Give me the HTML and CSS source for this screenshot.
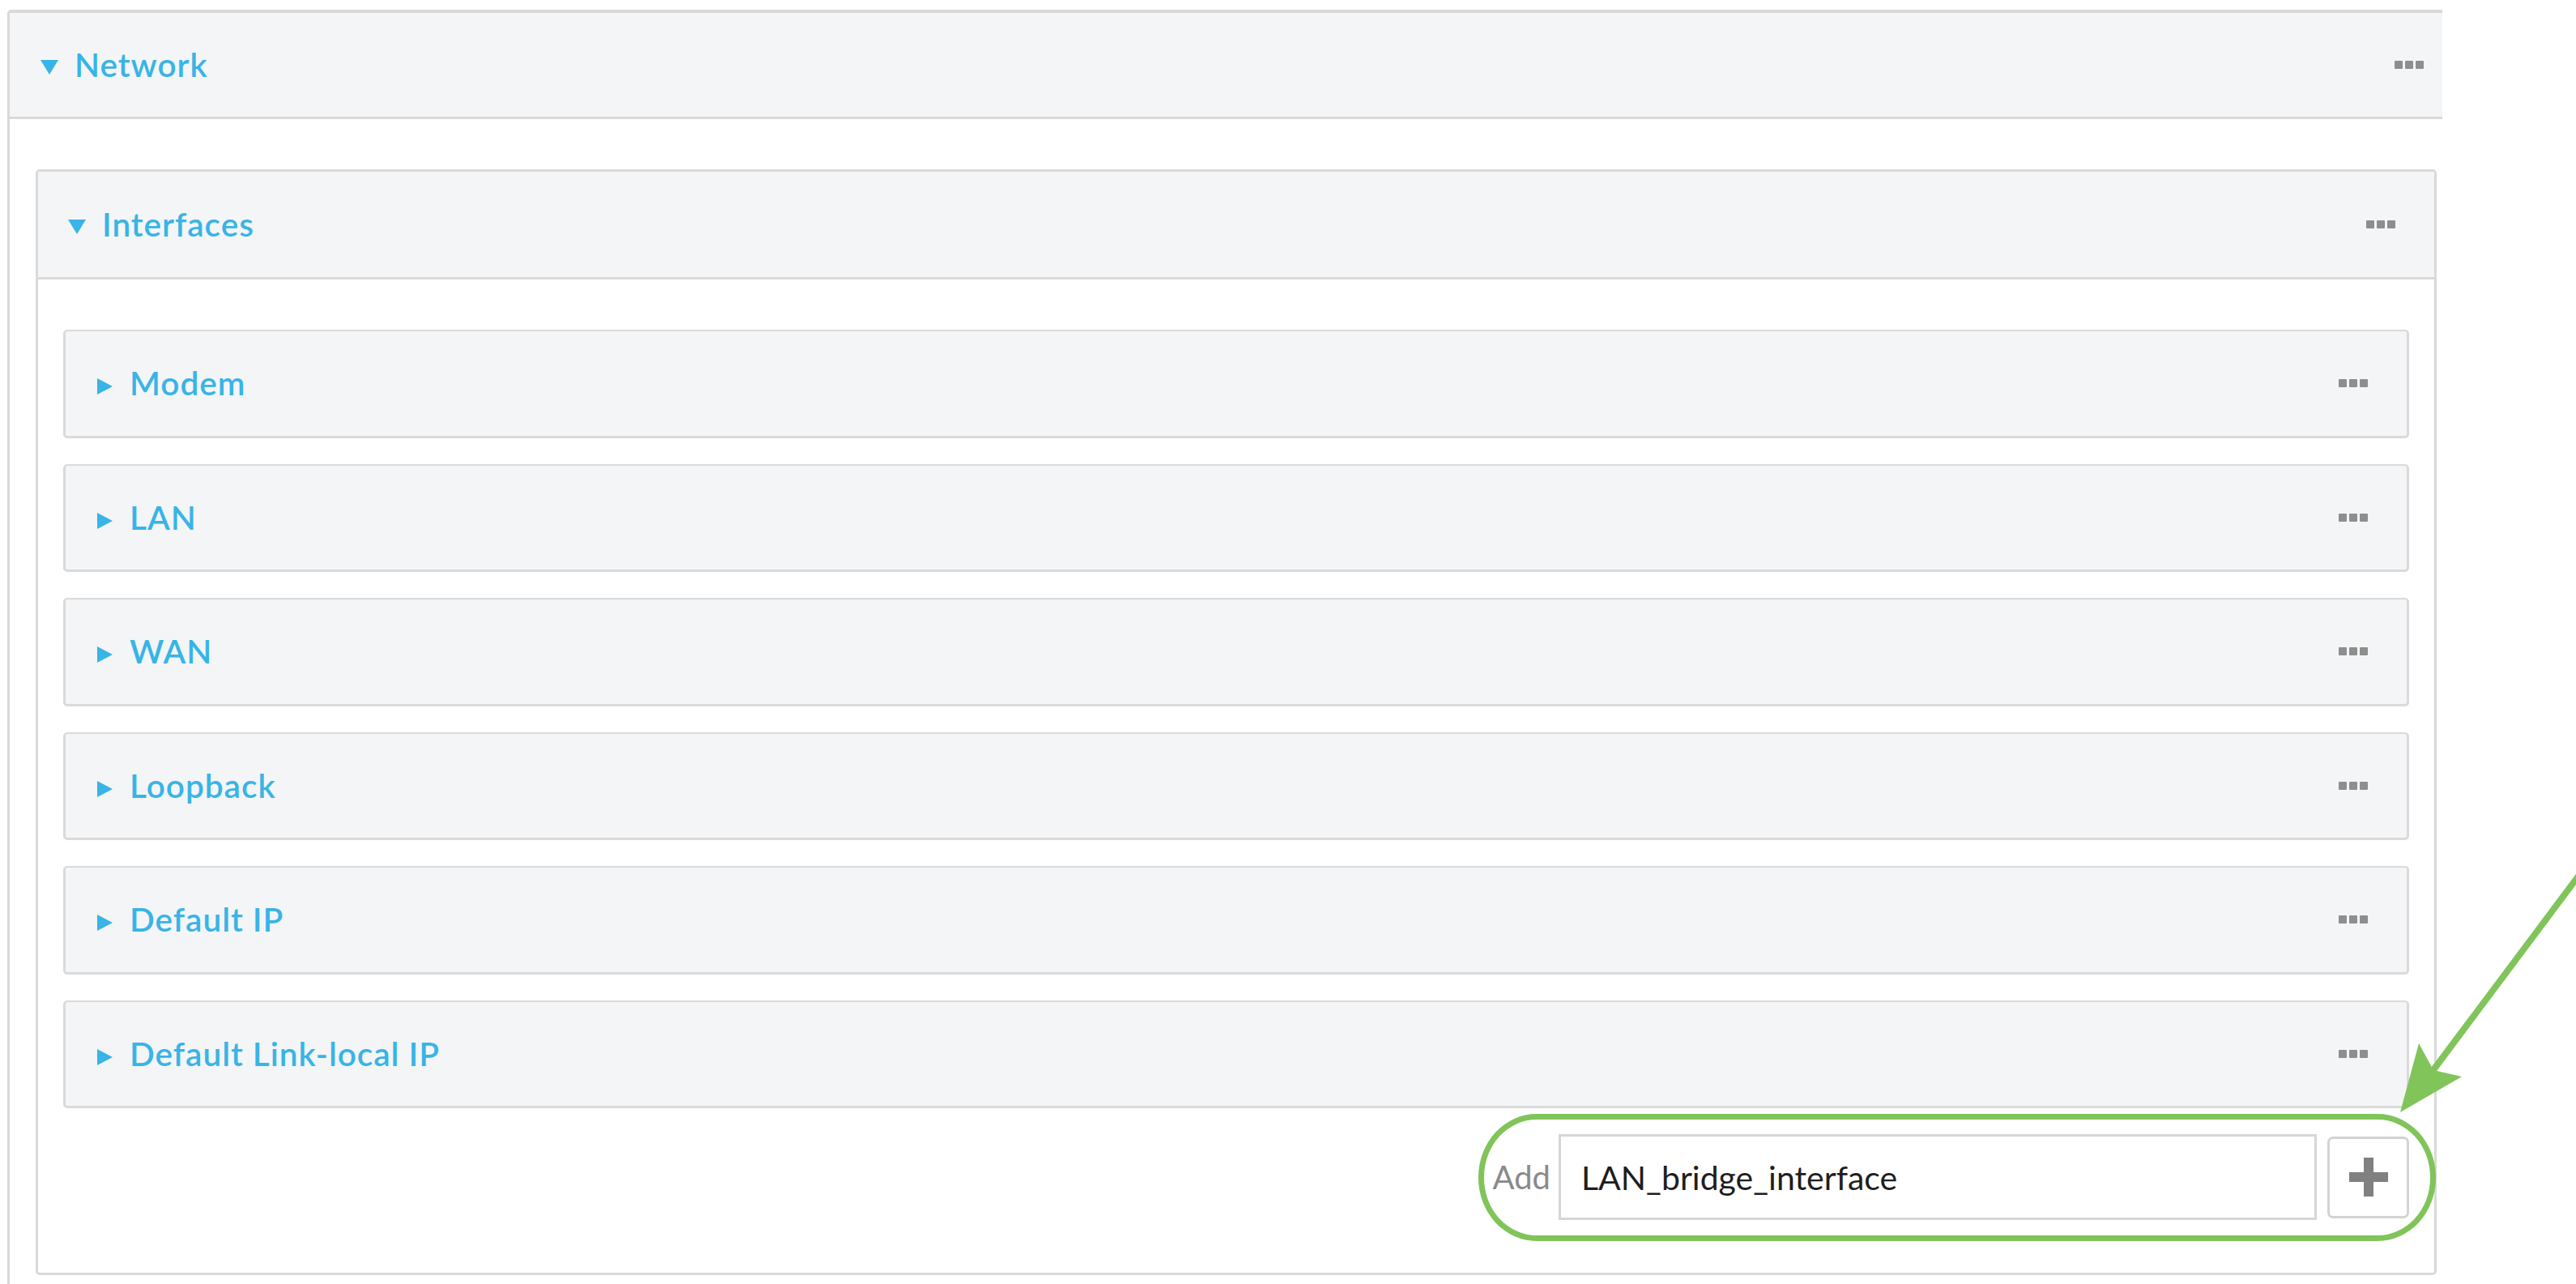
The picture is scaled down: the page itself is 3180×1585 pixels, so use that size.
FILE: index.html
```html
<!DOCTYPE html>
<html lang="en">
<head>
    <meta charset="UTF-8">
    <meta name="viewport" content="width=device-width, initial-scale=1.0">
    <title>Network - Interfaces</title>
    <link rel="stylesheet" href="styles.css">
</head>
<body>
    <div class="page">
        <div class="clip">
            <section class="panel outer">
                <header class="panel-head">
                    <span class="caret down"></span>
                    <span class="title">Network</span>
                    <span class="dots"><i></i><i></i><i></i></span>
                </header>
                <div class="panel-body">
                    <section class="panel inner">
                        <header class="panel-head">
                            <span class="caret down"></span>
                            <span class="title">Interfaces</span>
                            <span class="dots"><i></i><i></i><i></i></span>
                        </header>
                        <div class="panel-body">
                            <div class="item">
                                <span class="caret right"></span>
                                <span class="title">Modem</span>
                                <span class="dots"><i></i><i></i><i></i></span>
                            </div>
                            <div class="item">
                                <span class="caret right"></span>
                                <span class="title">LAN</span>
                                <span class="dots"><i></i><i></i><i></i></span>
                            </div>
                            <div class="item">
                                <span class="caret right"></span>
                                <span class="title">WAN</span>
                                <span class="dots"><i></i><i></i><i></i></span>
                            </div>
                            <div class="item">
                                <span class="caret right"></span>
                                <span class="title">Loopback</span>
                                <span class="dots"><i></i><i></i><i></i></span>
                            </div>
                            <div class="item">
                                <span class="caret right"></span>
                                <span class="title">Default IP</span>
                                <span class="dots"><i></i><i></i><i></i></span>
                            </div>
                            <div class="item">
                                <span class="caret right"></span>
                                <span class="title">Default Link-local IP</span>
                                <span class="dots"><i></i><i></i><i></i></span>
                            </div>

                            <div class="add-row">
                                <label for="new-iface">Add</label>
                                <input id="new-iface" type="text" value="LAN_bridge_interface">
                                <button class="add-btn" type="button">
                                    <svg width="48" height="48" viewBox="0 0 48 48">
                                        <rect x="0" y="18" width="48" height="12" fill="#808080"/>
                                        <rect x="18" y="0" width="12" height="48" fill="#808080"/>
                                    </svg>
                                </button>
                            </div>
                        </div>
                    </section>
                </div>
            </section>
        </div>

        <!-- annotation -->
        <div class="callout"></div>
        <svg class="arrow" viewBox="0 0 3180 1585" width="3180" height="1585">
            <line x1="3190" y1="1072" x2="3003" y2="1322" stroke="#80c45a" stroke-width="8"/>
            <polygon points="2963,1373 2986,1288 3004,1321 3039,1329" fill="#80c45a"/>
        </svg>
    </div>
</body>
</html>
```

FILE: styles.css
```css
html, body {
    margin: 0;
    padding: 0;
    background: #fff;
}
body {
    font-family: 'Lato', 'Noto Sans', sans-serif;
    overflow: hidden;
}
.page {
    position: relative;
    width: 3180px;
    height: 1585px;
    overflow: hidden;
}
.clip {
    width: 3015px;
    height: 1585px;
    overflow: hidden;
    padding: 12px 0 0 9px;
    box-sizing: border-box;
}
.panel {
    box-sizing: border-box;
    border: 3px solid #d9d9d9;
    border-radius: 5px;
    background: #fff;
}
.panel.outer {
    width: 3034px;
    border-top-width: 4px;
}
.panel-head {
    display: flex;
    align-items: center;
    height: 128px;
    padding: 0 48px 0 38px;
    background: #f4f5f7;
    border-bottom: 3px solid #d9d9d9;
}
.panel.inner .panel-head {
    height: 130px;
    padding-left: 37px;
}
.panel-body {
    padding: 62px 32px 62px 32px;
}
.panel.inner .panel-body {
    padding: 62px 31px 65px 31px;
}
.title {
    font-size: 40.5px;
    font-weight: 600;
    letter-spacing: 1px;
    color: #38b4e6;
    line-height: 1;
}
.caret {
    width: 0;
    height: 0;
    margin-right: 20px;
    margin-top: 6px;
}
.caret.down {
    border-left: 11px solid transparent;
    border-right: 11px solid transparent;
    border-top: 18px solid #38b4e6;
}
.caret.right {
    border-top: 10px solid transparent;
    border-bottom: 10px solid transparent;
    border-left: 19px solid #38b4e6;
    margin-left: 2px;
    margin-right: 21px;
    margin-top: 8px;
}
.dots {
    margin-left: auto;
    display: flex;
    gap: 3px;
}
.dots i {
    display: block;
    width: 10px;
    height: 10px;
    border-radius: 1px;
    background: #8e8e8e;
}
.item {
    display: flex;
    align-items: center;
    box-sizing: border-box;
    height: 133.5px;
    margin-bottom: 32px;
    padding: 0 48px 0 37px;
    background: #f4f5f7;
    border: 3px solid #dadada;
    border-top-width: 2px;
    border-radius: 5px;
}
.add-row {
    display: flex;
    justify-content: flex-end;
    align-items: center;
    height: 106px;
}
.add-row label {
    font-size: 40px;
    color: #8a8a8a;
    margin-right: 10px;
}
.add-row input {
    box-sizing: border-box;
    width: 936px;
    height: 106px;
    border: 3px solid #d6d6d6;
    border-radius: 0;
    padding: 0 0 0 25px;
    font-family: 'Lato', 'Noto Sans', sans-serif;
    font-size: 41px;
    color: #1e1e1e;
    outline: none;
}
.add-btn {
    box-sizing: border-box;
    width: 101px;
    height: 101px;
    margin-left: 13px;
    padding: 0;
    display: flex;
    align-items: center;
    justify-content: center;
    background: #fff;
    border: 3px solid #d3d3d3;
    border-radius: 7px;
}
.callout {
    position: absolute;
    left: 1825px;
    top: 1375px;
    width: 1182px;
    height: 157px;
    box-sizing: border-box;
    border: 7px solid #80c45a;
    border-radius: 72px / 78px;
}
.arrow {
    position: absolute;
    left: 0;
    top: 0;
    pointer-events: none;
}
```
